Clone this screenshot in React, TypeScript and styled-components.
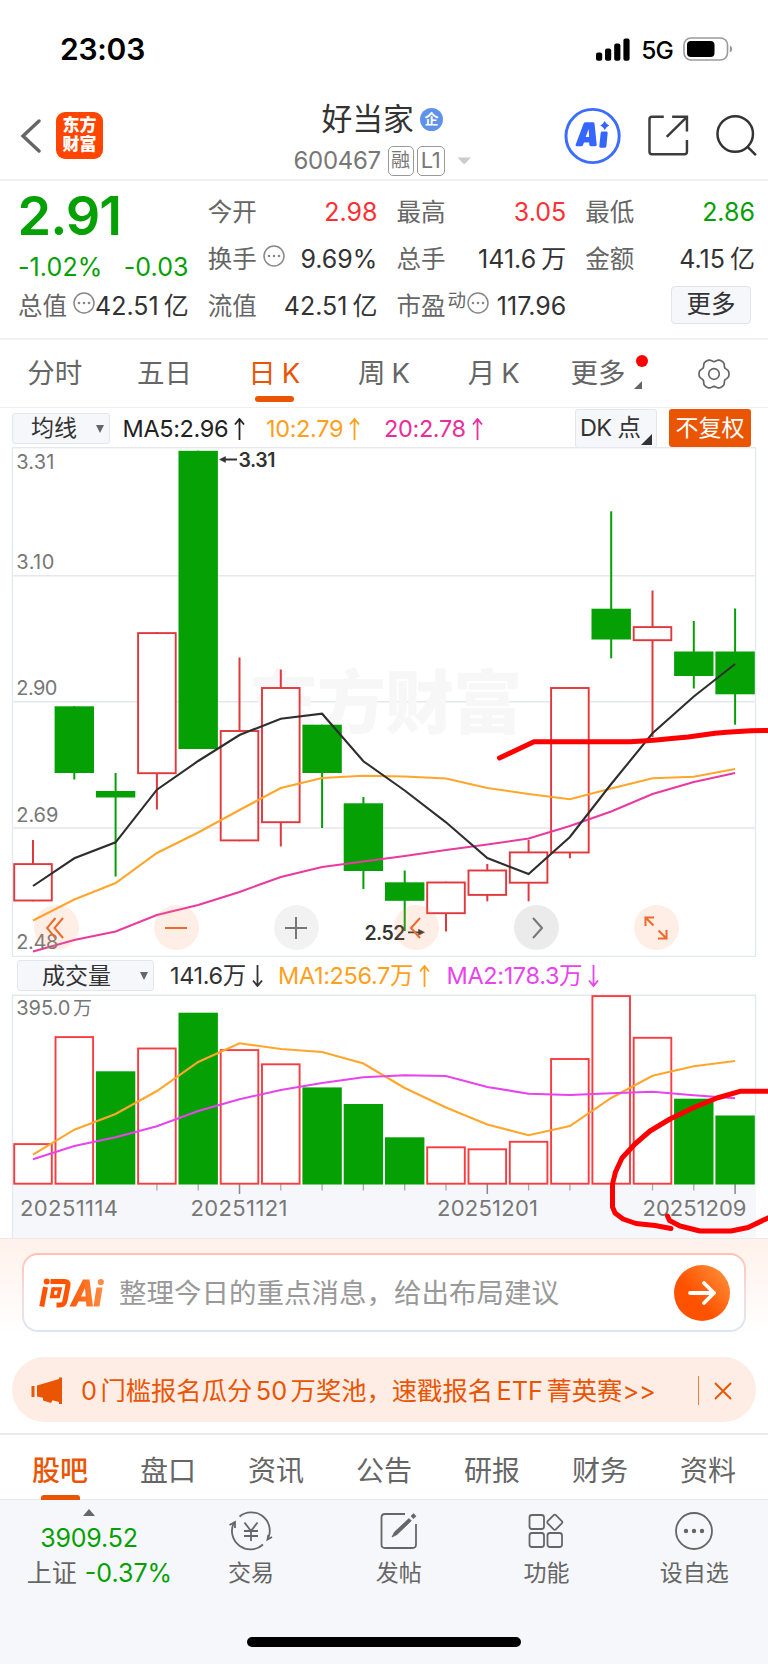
import React from "react";
import styled, { createGlobalStyle } from "styled-components";

const GREEN = "#04a004";
const ORANGE = "#ea5504";
const SANS = `Inter, "Noto Sans CJK SC", sans-serif`;

const GlobalStyle = createGlobalStyle`
  * { box-sizing: border-box; }
  body { margin: 0; background: #fff; }
  button { font: inherit; border: 0; padding: 0; background: none; color: inherit; }
`;

const Page = styled.main`
  position: relative;
  width: 768px;
  height: 1664px;
  overflow: hidden;
  display: flex;
  flex-direction: column;
  background: #fff;
  color: #333;
  font-family: ${SANS};
  font-size: 25px;
  line-height: 1;
  white-space: nowrap;
`;

/* ---------- status bar ---------- */

const StatusBar = styled.header`
  height: 100px;
  flex: none;
  display: flex;
  align-items: center;
  justify-content: space-between;
  padding: 0 35px 2px 60px;
  color: #000;
`;

const Clock = styled.time`
  font-size: 30px;
  font-weight: 600;
  letter-spacing: -0.25px;
`;

const StatusIcons = styled.div`
  display: flex;
  align-items: center;
`;

const Network = styled.span`
  font-size: 24.5px;
  font-weight: 500;
  margin: 2px 10px 0 11px;
  letter-spacing: -0.8px;
`;

/* ---------- title bar ---------- */

const TitleBar = styled.div`
  height: 81px;
  flex: none;
  display: grid;
  grid-template-columns: 270px 1fr 270px;
  border-bottom: 2px solid #efefef;
`;

const TitleLeft = styled.div`
  display: flex;
  align-items: center;
  gap: 15px;
  padding: 0 0 8px 20px;
`;

const BrandMark = styled.div`
  width: 47px;
  height: 47px;
  border-radius: 9px;
  background: #ff4500;
  color: #fff;
  display: flex;
  align-items: center;
  justify-content: center;
  text-align: center;
  font-size: 17px;
  font-weight: 900;
  line-height: 19px;
  padding-bottom: 1px;
`;

const TitleCenter = styled.div`
  display: flex;
  flex-direction: column;
  align-items: flex-start;
  padding: 2px 0 0 24px;
`;

const StockName = styled.h1`
  margin: 0 0 0 27.5px;
  height: 34px;
  display: flex;
  align-items: center;
  gap: 6px;
  color: #333;
  font-size: 30.8px;
  font-weight: 400;
`;

const CompanyBadge = styled.span`
  width: 23px;
  height: 23px;
  border-radius: 50%;
  background: #6092ec;
  color: #fff;
  font-size: 14px;
  font-weight: 700;
  line-height: 22px;
  text-align: center;
  margin-top: 1px;
`;

const CodeLine = styled.div`
  display: flex;
  align-items: center;
  margin-top: 10px;
  color: #777;
`;

const Code = styled.span`
  font-size: 24px;
  letter-spacing: -0.3px;
  width: 94px;
  margin-left: -0.5px;
`;

const Tag = styled.span`
  height: 30px;
  width: ${(p: { $w: number }) => p.$w}px;
  border: 1.5px solid #999;
  border-radius: 5px;
  margin-right: 3px;
  font-size: 19px;
  line-height: 27px;
  text-align: center;
`;

const LevelTag = styled(Tag)`
  font-size: 22px;
  letter-spacing: -0.5px;
`;

const TitleRight = styled.div`
  display: flex;
  align-items: center;
  padding: 0 11px 8px 66px;
  gap: 27px;
`;

/* ---------- quote ---------- */

const Quote = styled.section`
  height: 159px;
  flex: none;
  display: grid;
  grid-template-columns: repeat(4, 1fr);
  column-gap: 20px;
  padding: 7.5px 13px 0 19px;
  border-bottom: 2px solid #f3f3f3;
`;

const QuoteColumn = styled.div`
  display: flex;
  flex-direction: column;
`;

const Cell = styled.div`
  height: 47px;
  display: flex;
  align-items: center;
  justify-content: space-between;
`;

const Label = styled.span`
  font-size: 24.5px;
  color: #666;
  display: flex;
  margin-left: -1px;
`;

const Value = styled.span<{ $tone?: string }>`
  font-size: 25px;
  letter-spacing: 0;
  color: ${(p) => p.$tone ?? "#333"};
`;

const Unit = styled.span`
  margin-left: 5px;
`;

const Price = styled.div`
  height: 54px;
  font-size: 54px;
  line-height: 54px;
  font-weight: 600;
  color: ${GREEN};
  letter-spacing: -1px;
  margin-left: -1.5px;
`;

const Change = styled.div`
  height: 40px;
  padding-top: 12px;
  display: flex;
  justify-content: space-between;
  color: ${GREEN};
  letter-spacing: 0.1px;
  margin-left: -1px;
`;

const Superscript = styled.span`
  font-size: 18.5px;
  margin: -3px 0 0 2px;
`;

const MoreButton = styled.button`
  width: 80px;
  height: 38px;
  margin: -3px 4px 0 auto;
  border: 1.5px solid #e2e4ea;
  border-radius: 4px;
  background: #f6f7fa;
  font-size: 24.5px;
  color: #333;
`;

/* ---------- period tabs ---------- */

const PeriodTabs = styled.nav`
  height: 68px;
  flex: none;
  display: grid;
  grid-template-columns: repeat(7, 1fr);
  border-bottom: 1px solid #f0f0f0;
`;

const Period = styled.button<{ $active?: boolean; $shift?: number }>`
  display: flex;
  align-items: center;
  justify-content: center;
  font-size: 27.5px;
  color: ${(p) => (p.$active ? ORANGE : "#666")};
  position: relative;
  padding: 1px 0 0 ${(p) => p.$shift ?? 0}px;
  ${(p) =>
    p.$active &&
    `&::after {
      content: "";
      position: absolute;
      left: 50%;
      margin-left: -19.5px;
      bottom: 5px;
      width: 39px;
      height: 6px;
      border-radius: 3px;
      background: ${ORANGE};
    }`}
`;

const K = styled.span`
  margin-left: 6px;
`;

const MoreMarks = styled.span`
  width: 15px;
  height: 30px;
  margin-left: 7px;
  position: relative;
`;

const RedDot = styled.i`
  position: absolute;
  right: -1px;
  top: -4px;
  width: 12px;
  height: 12px;
  border-radius: 50%;
  background: #fe0000;
`;

const Corner = styled.i<{ $size: number }>`
  width: 0;
  height: 0;
  border-left: ${(p) => p.$size}px solid transparent;
  border-bottom: ${(p) => p.$size}px solid currentColor;
`;

const MoreCorner = styled(Corner)`
  position: absolute;
  left: 2px;
  bottom: 0;
`;

/* ---------- indicator rows ---------- */

const IndicatorRow = styled.div<{ $h: number; $left: number }>`
  height: ${(p) => p.$h}px;
  flex: none;
  display: flex;
  align-items: center;
  padding: 1px 17px 0 ${(p) => p.$left}px;
  font-size: 23.5px;
`;

const Picker = styled.button<{ $w: number; $gap: number }>`
  width: ${(p) => p.$w}px;
  height: 31px;
  border: 1.5px solid #e4e6ec;
  border-radius: 3px;
  background: #f6f7fa;
  display: flex;
  align-items: center;
  justify-content: flex-end;
  gap: ${(p) => p.$gap}px;
  padding: 1px 5px 0 0;
  font-size: 23px;
  color: #333;
`;

const Caret = styled.i`
  border: 4.5px solid transparent;
  border-top: 8px solid #666;
  border-bottom: 0;
`;

const Average = styled.span<{ $w: number; $tone: string }>`
  width: ${(p) => p.$w}px;
  display: flex;
  align-items: center;
  gap: 6px;
  color: ${(p) => p.$tone};
  letter-spacing: -0.35px;
  padding-top: 1px;
`;

const AverageText = styled.span<{ $left: number }>`
  margin-left: ${(p) => p.$left}px;
`;

const DkButton = styled.button`
  width: 82px;
  height: 39px;
  margin-left: auto;
  border: 1.5px solid #e4e6ec;
  border-radius: 3px;
  background: #f6f7fa;
  display: flex;
  align-items: center;
  justify-content: space-between;
  padding: 0 4px 0 4px;
  font-size: 23.5px;
  letter-spacing: -0.6px;
  color: #333;
`;

const DkCorner = styled(Corner)`
  align-self: flex-end;
  margin-bottom: 2px;
`;

const AdjustButton = styled.button`
  width: 82px;
  height: 38px;
  margin-left: 12px;
  border-radius: 3px;
  background: ${ORANGE};
  color: #fff;
  font-size: 23px;
  padding-top: 1px;
`;

/* ---------- chart ---------- */

const ChartBox = styled.div`
  position: relative;
  flex: none;
  svg { display: block; }
`;

const ChartTools = styled.div`
  position: absolute;
  left: 33.5px;
  top: 458px;
  display: flex;
  gap: 75px;
`;

const ToolButton = styled.button<{ $tone: "peach" | "gray" | "dark" }>`
  width: 45px;
  height: 45px;
  border-radius: 50%;
  display: flex;
  align-items: center;
  justify-content: center;
  background: ${(p) =>
    p.$tone === "peach"
      ? "rgba(247,140,85,.15)"
      : p.$tone === "gray"
      ? "rgba(0,0,0,.05)"
      : "rgba(0,0,0,.08)"};
  color: ${(p) => (p.$tone === "peach" ? "#f0682a" : "#777")};
`;

/* ---------- AI prompt ---------- */

const AiSection = styled.section`
  height: 119px;
  flex: none;
  border-top: 1.5px solid #e9e9ea;
  background: linear-gradient(#fff1eb, #fff 95px);
  padding: 14px 22px 0 22px;
`;

const AiCard = styled.div`
  height: 79px;
  border: 2px solid transparent;
  border-radius: 16px;
  background: linear-gradient(#fff, #fff) padding-box,
    linear-gradient(#ffc1b2, #f6dde0 55%, #dde4f6) border-box;
  display: flex;
  align-items: center;
  padding: 0 14px 0 15px;
`;

const AiPrompt = styled.span`
  flex: 1;
  margin: 3px 0 0 14px;
  font-size: 27.5px;
  color: #999;
`;

const SendButton = styled.button`
  width: 56px;
  height: 56px;
  border-radius: 50%;
  background: linear-gradient(50deg, #ff5200 40%, #ff9640);
  display: flex;
  align-items: center;
  justify-content: center;
`;

/* ---------- promo ---------- */

const Promo = styled.div`
  height: 65px;
  flex: none;
  margin: 0 12px 11px;
  border-radius: 33px;
  background: #fdede4;
  color: ${ORANGE};
  display: flex;
  align-items: center;
  padding: 2px 24px 0 19px;
`;

const PromoText = styled.span`
  flex: 1;
  margin: 1px 0 0 18px;
  font-size: 25.3px;
  word-spacing: -3.6px;
`;

const PromoDivider = styled.i`
  width: 1.5px;
  height: 29px;
  background: #ee7d42;
  margin-right: 15px;
`;

/* ---------- section tabs ---------- */

const SectionTabs = styled.nav`
  height: 67px;
  flex: none;
  border-top: 2px solid #ebebeb;
  border-bottom: 1.5px solid #e9e9ea;
  display: grid;
  grid-template-columns: repeat(7, 1fr);
  padding: 0 6px 0 6px;
`;

const SectionTab = styled.button<{ $active?: boolean }>`
  font-size: 28px;
  font-weight: ${(p) => (p.$active ? 500 : 400)};
  color: ${(p) => (p.$active ? ORANGE : "#666")};
  display: flex;
  flex-direction: column;
  align-items: center;
  padding-top: 22px;
  &::after {
    content: "";
    width: 39px;
    height: 5px;
    margin-top: 9.5px;
    border-radius: 3px 3px 0 0;
    background: ${(p) => (p.$active ? ORANGE : "transparent")};
  }
`;

/* ---------- bottom bar ---------- */

const BottomBar = styled.footer`
  flex: 1;
  background: #f6f7fa;
  display: flex;
  flex-direction: column;
  justify-content: space-between;
  align-items: center;
  padding-bottom: 17px;
`;

const BottomRow = styled.div`
  width: 768px;
  display: grid;
  grid-template-columns: 177px repeat(4, 147.8px);
`;

const IndexBlock = styled.div`
  display: flex;
  flex-direction: column;
  align-items: center;
  padding: 9px 0 0 22px;
  color: ${GREEN};
`;

const UpCaret = styled.i`
  border: 6.5px solid transparent;
  border-bottom: 7px solid #666;
  border-top: 0;
  margin-right: 21px;
`;

const IndexValue = styled.span`
  margin: 10px 21px 10px 0;
  letter-spacing: -0.2px;
`;

const IndexName = styled.span`
  display: flex;
  gap: 8px;
  align-items: center;
`;

const Gray = styled.span`
  color: #666;
`;

const Action = styled.button`
  display: flex;
  flex-direction: column;
  align-items: center;
  gap: 10px;
  padding-top: 10px;
  font-size: 23px;
  color: #666;
`;

const HomeIndicator = styled.div`
  width: 274px;
  height: 10px;
  border-radius: 5px;
  background: #000;
`;

const Markup = styled.svg`
  position: absolute;
  left: 0;
  top: 0;
  pointer-events: none;
`;

/* ---------- small drawings ---------- */

const Arrow = ({ down }: { down?: boolean }) => (
  <svg width="11" height="22" viewBox="0 0 11 22" fill="none" stroke="currentColor" strokeWidth="1.8">
    <path d={down ? "M5.5 0V21M1 15.5L5.5 21L10 15.5" : "M5.5 22V1M1 6.5L5.5 1L10 6.5"} />
  </svg>
);

const Hint = () => (
  <svg width="22" height="22" viewBox="0 0 22 22" fill="none" stroke="#888" strokeWidth="1.5">
    <circle cx="11" cy="11" r="10" />
    <g fill="#888" stroke="none">
      <circle cx="6" cy="11" r="1.3" />
      <circle cx="11" cy="11" r="1.3" />
      <circle cx="16" cy="11" r="1.3" />
    </g>
  </svg>
);

const HintSlot = styled.span<{ $left: number }>`
  margin: -2px 0 0 ${(p) => p.$left}px;
  height: 22px;
`;

const gearOutline = Array.from({ length: 72 }, (_, i) => {
  const a = (i * Math.PI) / 36;
  const r = 14 + 1.3 * Math.cos(6 * a) - 0.3 * Math.cos(12 * a);
  return `${(r * Math.cos(a)).toFixed(2)},${(r * Math.sin(a)).toFixed(2)}`;
}).join(" ");

const Gear = () => (
  <svg width="34" height="34" viewBox="-17 -17 34 34" fill="none" stroke="#666" strokeWidth="1.7" strokeLinejoin="round">
    <polygon points={gearOutline} />
    <circle r="5.3" />
  </svg>
);

/* ---------- data ---------- */

const FIRST_X = 33;
const PITCH = 41.3;
const BAR = 39.4;
const cx = (i: number) => FIRST_X + i * PITCH;

type Candle = { up: boolean; top: number; bottom: number; high?: number; low?: number };

const candles: Candle[] = [
  { up: true, top: 863.3, bottom: 901.3, high: 840 },
  { up: false, top: 706.3, bottom: 773, low: 779.5 },
  { up: false, top: 791, bottom: 797.5, high: 773, low: 876.5 },
  { up: true, top: 632.3, bottom: 774, low: 809.5 },
  { up: false, top: 450.8, bottom: 749 },
  { up: true, top: 730.2, bottom: 841.2, high: 657.5 },
  { up: true, top: 687.2, bottom: 823, high: 669.5, low: 846.5 },
  { up: false, top: 724.7, bottom: 773, low: 828 },
  { up: false, top: 803.3, bottom: 871, high: 797, low: 889 },
  { up: false, top: 882.3, bottom: 900.8, high: 870.5, low: 931 },
  { up: true, top: 881.7, bottom: 914, low: 931.5 },
  { up: true, top: 869.7, bottom: 895.7, high: 864, low: 901.3 },
  { up: true, top: 851.6, bottom: 883.5, high: 840, low: 901.3 },
  { up: true, top: 687.2, bottom: 853.3, low: 858.3 },
  { up: false, top: 608.7, bottom: 639.5, high: 511.3, low: 658.3 },
  { up: true, top: 626.3, bottom: 641, high: 590.5, low: 737 },
  { up: false, top: 651.5, bottom: 676, high: 621, low: 688.5 },
  { up: false, top: 651.5, bottom: 694.3, high: 608.5, low: 724.7 },
];

const volumes: [number, boolean][] = [
  [1143.3, true], [1036.3, true], [1071.3, false], [1047.7, true], [1012.7, false], [1049.3, true],
  [1063.5, true], [1087.4, false], [1104, false], [1137.3, false], [1146.5, true], [1148.5, true],
  [1141, true], [1058.2, true], [995.3, true], [1037, true], [1098.7, false], [1115.5, false],
];

const priceLines = [
  { color: "#e93aa0", ys: [951.5, 940, 931.5, 915, 905, 892, 877, 867, 861.5, 856, 850, 844.5, 838.5, 826, 811.5, 794, 782, 773] },
  { color: "#ffa62b", ys: [920.5, 899.5, 883, 853, 832.5, 810, 788, 778, 775.7, 776.5, 778.5, 788, 794, 799.2, 788.5, 778.2, 776.7, 769] },
  { color: "#2e2e2e", ys: [886, 858.3, 842.3, 789.7, 761, 735, 718.7, 713.7, 761.3, 790.5, 822.3, 858, 874, 837, 784, 733.3, 696.5, 664] },
];

const volumeLines = [
  { color: "#ffa62b", ys: [1154.7, 1129.7, 1114, 1091, 1062, 1043.3, 1049, 1052, 1063.5, 1088, 1107.5, 1124.5, 1135.2, 1126, 1098, 1075.8, 1066.3, 1061] },
  { color: "#e844ee", ys: [1159.3, 1146, 1137.3, 1126.3, 1111, 1099.2, 1090, 1083, 1077.3, 1075.3, 1076, 1087, 1093.7, 1095, 1093.3, 1091.8, 1095.3, 1098.3] },
];

const toPoints = (ys: number[]) => ys.map((y, i) => `${cx(i)},${y}`).join(" ");

const priceLabels: [string, number, number][] = [
  ["3.31", 469, 38],
  ["3.10", 568.8, 38],
  ["2.90", 695.3, 41],
  ["2.69", 822.3, 42],
  ["2.48", 949.3, 42],
];

const dateLabels: [string, number, number][] = [
  ["20251114", 20, 98],
  ["20251121", 190.5, 97],
  ["20251201", 437, 101],
  ["20251209", 642.5, 104],
];

const Bar = ({ i, up, top, bottom, red }: { i: number; up: boolean; top: number; bottom: number; red: string }) => {
  const x = cx(i) - BAR / 2;
  return up ? (
    <rect x={x + 0.9} y={top + 0.8} width={BAR - 1.8} height={bottom - top - 1.6} fill="#fff" stroke={red} strokeWidth="1.9" />
  ) : (
    <rect x={x} y={top} width={BAR} height={bottom - top} fill={GREEN} />
  );
};

const PriceChart = () => (
  <svg width="768" height="510" viewBox="0 447 768 510" fontFamily={SANS}>
    <g stroke="#e6e8ef" strokeWidth="1.4" fill="none">
      <rect x="12.5" y="447.7" width="743" height="508.8" />
      <path d="M12.5 575.7H755.5M12.5 701.8H755.5M12.5 828H755.5" />
    </g>
    <text x="249" y="728" fontSize="69" fontWeight="900" fill="#f7f7f7" textLength="273">
      东方财富
    </text>
    {candles.map((c, i) => {
      const color = c.up ? "#e0383c" : GREEN;
      return (
        <g key={i}>
          <path d={`M${cx(i)} ${c.high ?? c.top}V${c.low ?? c.bottom}`} stroke={color} strokeWidth="2" />
          <Bar i={i} up={c.up} top={c.top} bottom={c.bottom} red={color} />
        </g>
      );
    })}
    {priceLines.map((l) => (
      <polyline key={l.color} points={toPoints(l.ys)} fill="none" stroke={l.color} strokeWidth="2.1" />
    ))}
    <g fontSize="20" fill="#777">
      {priceLabels.map(([t, y, w]) => (
        <text key={t} x="16.3" y={y} textLength={w}>
          {t}
        </text>
      ))}
    </g>
    <g fontSize="19.5" fontWeight="600" fill="#333">
      <text x="238.5" y="466.7" textLength="37">3.31</text>
      <text x="364.5" y="940" textLength="41">2.52</text>
      <g stroke="#333" strokeWidth="1.8">
        <path d="M224 459.5H237M408 932.3H420" />
        <path d="M219.5 459.5L225.5 456.5V462.5ZM424.5 932.3L418.5 929.3V935.3Z" strokeWidth="0.5" />
      </g>
    </g>
  </svg>
);

const VolumeChart = () => (
  <svg width="768" height="245" viewBox="0 993 768 245" fontFamily={SANS}>
    <rect x="12" y="1184" width="744" height="54" fill="#f6f7fb" />
    <path d="M12.5 1238V995.3H755.5V1184" fill="none" stroke="#e6e8ef" strokeWidth="1.4" />
    <path
      d={[3, 4, 6, 7, 8, 9, 10, 12, 13, 15, 16].map((i) => `M${cx(i)} 1184V1190.5`).join("")}
      stroke="#aaa"
      strokeWidth="1.3"
    />
    <path d={[5, 11, 17].map((i) => `M${cx(i)} 1184V1194`).join("")} stroke="#888" strokeWidth="1.5" />
    {volumes.map(([top, up], i) => (
      <Bar key={i} i={i} up={up} top={top} bottom={1184.5} red="#f83c40" />
    ))}
    {volumeLines.map((l) => (
      <polyline key={l.color} points={toPoints(l.ys)} fill="none" stroke={l.color} strokeWidth="2.1" />
    ))}
    <text x="16.3" y="1014.5" fontSize="20" fill="#777" textLength="54">395.0</text>
    <text x="73" y="1014.5" fontSize="19" fill="#777">万</text>
    <g fontSize="22" fill="#777">
      {dateLabels.map(([t, x, w]) => (
        <text key={t} x={x} y="1215.7" textLength={w}>
          {t}
        </text>
      ))}
    </g>
  </svg>
);

export default function App() {
  return (
    <Page>
      <GlobalStyle />

      <StatusBar>
        <Clock>23:03</Clock>
        <StatusIcons>
          <svg width="34" height="23" viewBox="0 0 34 23">
            <rect x="0" y="14.5" width="6.2" height="8.2" rx="2" />
            <rect x="9" y="10.5" width="6.2" height="12.2" rx="2" />
            <rect x="18.2" y="5.5" width="6.2" height="17.2" rx="2" />
            <rect x="27.4" y="0.5" width="6.2" height="22.2" rx="2" />
          </svg>
          <Network>5G</Network>
          <svg width="50" height="24" viewBox="0 0 50 24">
            <rect x="1" y="1" width="43.5" height="22" rx="7" fill="none" stroke="#9a9a9a" strokeWidth="1.6" />
            <rect x="4" y="4" width="27.5" height="16" rx="4" />
            <path d="M46.8 8.5Q49.3 9.5 49.3 12T46.8 15.5Z" fill="#9a9a9a" />
          </svg>
        </StatusIcons>
      </StatusBar>

      <TitleBar>
        <TitleLeft>
          <svg width="21" height="36" viewBox="0 0 21 36" fill="none" stroke="#666" strokeWidth="3.4" strokeLinecap="round">
            <path d="M19 3L3 18L19 33" />
          </svg>
          <BrandMark>
            东方
            <br />
            财富
          </BrandMark>
        </TitleLeft>
        <TitleCenter>
          <StockName>
            好当家 <CompanyBadge>企</CompanyBadge>
          </StockName>
          <CodeLine>
            <Code>600467</Code>
            <Tag $w={26}>融</Tag>
            <LevelTag $w={28}>L1</LevelTag>
            <svg width="24" height="8" viewBox="0 0 24 8">
              <path d="M9.5 0.5H23L16.2 7.5Z" fill="#ccc" />
            </svg>
          </CodeLine>
        </TitleCenter>
        <TitleRight>
          <svg width="58" height="58" viewBox="0 0 58 58">
            <circle cx="29" cy="29" r="27" fill="none" stroke="#3d6dff" strokeWidth="3" />
            <path
              fill="#3566ff"
              fillRule="evenodd"
              d="M22 15H29.5Q30.8 15 31 16.5L33.2 38Q33.3 39.5 32 39.5H27Q25.8 39.5 25.7 38L25.5 35.5H20.3L19.2 38.5Q18.8 39.5 17.8 39.5H12.8Q11.2 39.5 11.8 38L19.8 16.5Q20.500 15 22 15ZM25 22L22 30H25.5ZM38.800 24.500H43Q44.400 24.500 44.300 26L43 39.500Q42.800 41 41.400 41H37Q35.600 41 35.800 39.500L37.200 26Q37.400 24.500 38.800 24.500ZM41.300 13.800L43.200 16.500L45.800 18.300L43.200 20.100L41.300 22.800L39.400 20.100L36.800 18.300L39.400 16.500Z"
            />
          </svg>
          <svg width="41" height="41" viewBox="0 0 41 41" fill="none" stroke="#3c3c3c" strokeWidth="2.5">
            <path d="M16 1.5H4Q1.500 1.500 1.500 4V37Q1.500 39.500 4 39.500H37Q39.500 39.500 39.500 37V25" />
            <path d="M24.500 1.500H39.500V16.500M39.500 1.500L19 22" />
          </svg>
          <svg width="42" height="42" viewBox="0 0 42 42" fill="none" stroke="#333" strokeWidth="2.5">
            <circle cx="19.5" cy="19" r="18" />
            <path d="M31.500 31.500L40.500 40.500" />
          </svg>
        </TitleRight>
      </TitleBar>

      <Quote>
        <QuoteColumn>
          <Price>2.91</Price>
          <Change>
            <span>-1.02%</span>
            <span>-0.03</span>
          </Change>
          <Cell>
            <Label>
              总值
              <HintSlot $left={6}>
                <Hint />
              </HintSlot>
            </Label>
            <Value>
              42.51<Unit>亿</Unit>
            </Value>
          </Cell>
        </QuoteColumn>
        <QuoteColumn>
          <Cell>
            <Label>今开</Label>
            <Value $tone="#fb3034">2.98</Value>
          </Cell>
          <Cell>
            <Label>
              换手
              <HintSlot $left={6}>
                <Hint />
              </HintSlot>
            </Label>
            <Value>9.69%</Value>
          </Cell>
          <Cell>
            <Label>流值</Label>
            <Value>
              42.51<Unit>亿</Unit>
            </Value>
          </Cell>
        </QuoteColumn>
        <QuoteColumn>
          <Cell>
            <Label>最高</Label>
            <Value $tone="#fb3034">3.05</Value>
          </Cell>
          <Cell>
            <Label>总手</Label>
            <Value>
              141.6<Unit>万</Unit>
            </Value>
          </Cell>
          <Cell>
            <Label>
              市盈<Superscript>动</Superscript>
              <HintSlot $left={1}>
                <Hint />
              </HintSlot>
            </Label>
            <Value>117.96</Value>
          </Cell>
        </QuoteColumn>
        <QuoteColumn>
          <Cell>
            <Label>最低</Label>
            <Value $tone={GREEN}>2.86</Value>
          </Cell>
          <Cell>
            <Label>金额</Label>
            <Value>
              4.15<Unit>亿</Unit>
            </Value>
          </Cell>
          <Cell>
            <MoreButton>更多</MoreButton>
          </Cell>
        </QuoteColumn>
      </Quote>

      <PeriodTabs>
        <Period>分时</Period>
        <Period>五日</Period>
        <Period $active>
          日<K>K</K>
        </Period>
        <Period>
          周<K>K</K>
        </Period>
        <Period>
          月<K>K</K>
        </Period>
        <Period $shift={11}>
          更多
          <MoreMarks>
            <RedDot />
            <MoreCorner $size={8} />
          </MoreMarks>
        </Period>
        <Period $shift={1}>
          <Gear />
        </Period>
      </PeriodTabs>

      <IndicatorRow $h={39} $left={12}>
        <Picker $w={98} $gap={19}>
          均线
          <Caret />
        </Picker>
        <Average $w={156} $tone="#222">
          <AverageText $left={12.5}>MA5:2.96</AverageText>
          <Arrow />
        </Average>
        <Average $w={118} $tone="#ffa01c">
          10:2.79
          <Arrow />
        </Average>
        <Average $w={110} $tone="#ea2d9c">
          20:2.78
          <Arrow />
        </Average>
        <DkButton>
          DK 点
          <DkCorner $size={11} />
        </DkButton>
        <AdjustButton>不复权</AdjustButton>
      </IndicatorRow>

      <ChartBox>
        <PriceChart />
        <ChartTools>
          <ToolButton $tone="peach">
            <svg width="20" height="24" viewBox="0 0 20 24" fill="none" stroke="currentColor" strokeWidth="2">
              <path d="M9.5 2L1 12L9.5 22M17 2L8.500 12L17 22" />
            </svg>
          </ToolButton>
          <ToolButton $tone="peach">
            <svg width="22" height="22" viewBox="0 0 22 22" stroke="currentColor" strokeWidth="2">
              <path d="M0 11H22" />
            </svg>
          </ToolButton>
          <ToolButton $tone="gray">
            <svg width="22" height="22" viewBox="0 0 22 22" stroke="currentColor" strokeWidth="2">
              <path d="M0 11H22M11 0V22" />
            </svg>
          </ToolButton>
          <ToolButton $tone="peach">
            <svg width="14" height="24" viewBox="0 0 14 24" fill="none" stroke="currentColor" strokeWidth="2">
              <path d="M11 2L2 12L11 22" />
            </svg>
          </ToolButton>
          <ToolButton $tone="dark">
            <svg width="14" height="24" viewBox="0 0 14 24" fill="none" stroke="currentColor" strokeWidth="2">
              <path d="M4 2L13 12L4 22" />
            </svg>
          </ToolButton>
          <ToolButton $tone="peach">
            <svg width="24" height="24" viewBox="0 0 24 24" fill="none" stroke="currentColor" strokeWidth="2">
              <path d="M1.500 10V1.500H10M1.500 1.500L9.500 9.500M22.500 14V22.500H14M22.500 22.500L14.500 14.500" />
            </svg>
          </ToolButton>
        </ChartTools>
      </ChartBox>

      <IndicatorRow $h={36} $left={17}>
        <Picker $w={137} $gap={29}>
          成交量
          <Caret />
        </Picker>
        <Average $w={124} $tone="#333">
          <AverageText $left={16}>141.6万</AverageText>
          <Arrow down />
        </Average>
        <Average $w={168.5} $tone="#ffa01c">
          MA1:256.7万
          <Arrow />
        </Average>
        <Average $w={170} $tone="#e844ee">
          MA2:178.3万
          <Arrow down />
        </Average>
      </IndicatorRow>

      <ChartBox>
        <VolumeChart />
      </ChartBox>

      <AiSection>
        <AiCard>
          <svg width="66" height="30" viewBox="0 0 66 30">
            <defs>
              <linearGradient id="ask" gradientUnits="userSpaceOnUse" x1="0" y1="0" x2="66" y2="0">
                <stop offset="0.4" stopColor="#ff5300" />
                <stop offset="1" stopColor="#ff8f45" />
              </linearGradient>
            </defs>
            <g fill="none" stroke="url(#ask)">
              <path d="M6.500 9L2.800 28.500" strokeWidth="5" />
              <path d="M11.500 3.500H25.500Q29.500 3.500 29 7L25.800 23.500Q25 27 21 27H17.500" strokeWidth="5" />
              <path d="M14 11H21L19.300 18.500H12.800L14.300 9.500" strokeWidth="3.600" />
            </g>
            <path
              fill="url(#ask)"
              fillRule="evenodd"
              d="M44 1.500H50.500L54 28.500H47.500L47 23.500H39.500L37 28.500H30.500ZM46 10L42 18.500H46.700ZM57.500 9.500H63.500L60.500 28.500H54.500Z"
            />
            <circle cx="7.700" cy="3.600" r="3" fill="#ff5300" />
            <circle cx="61.800" cy="4" r="3.100" fill="#ff8f45" />
          </svg>
          <AiPrompt>整理今日的重点消息，给出布局建议</AiPrompt>
          <SendButton>
            <svg width="28" height="24" viewBox="0 0 28 24" fill="none" stroke="#fff" strokeWidth="3.8" strokeLinecap="round" strokeLinejoin="round">
              <path d="M2 12H26M16 2L26 12L16 22" />
            </svg>
          </SendButton>
        </AiCard>
      </AiSection>

      <Promo>
        <svg width="32" height="28" viewBox="0 0 32 28" fill={ORANGE}>
          <path d="M0.500 9H3.500V20H0.500ZM6 8.500L28 2V0.500H31V27H28V25L21.500 23.200L20 26L12 23.500V20.800L6 19.500Z" />
        </svg>
        <PromoText>0 门槛报名瓜分 50 万奖池，速戳报名 ETF 菁英赛&gt;&gt;</PromoText>
        <PromoDivider />
        <svg width="18" height="18" viewBox="0 0 18 18" stroke={ORANGE} strokeWidth="1.9">
          <path d="M1 1L17 17M17 1L1 17" />
        </svg>
      </Promo>

      <SectionTabs>
        <SectionTab $active>股吧</SectionTab>
        <SectionTab>盘口</SectionTab>
        <SectionTab>资讯</SectionTab>
        <SectionTab>公告</SectionTab>
        <SectionTab>研报</SectionTab>
        <SectionTab>财务</SectionTab>
        <SectionTab>资料</SectionTab>
      </SectionTabs>

      <BottomBar>
        <BottomRow>
          <IndexBlock>
            <UpCaret />
            <IndexValue>3909.52</IndexValue>
            <IndexName>
              <Gray>上证</Gray> -0.37%
            </IndexName>
          </IndexBlock>
          <Action>
            <svg width="44" height="42" viewBox="-22 -21 44 42" fill="none" stroke="#666" strokeWidth="1.8">
              <path d="M-11.500 -14.500A18.500 18.500 0 0 1 17.500 6.500M12 13.500A18.500 18.500 0 0 1 -17.500 -7.500" />
              <path d="M21 6L16.500 8.500L17.300 4M-21.500 -6L-16 -9V-3" />
              <path d="M-6.500 -8.500L0 0L6.500 -8.500M0 0V10M-7 0H7M-7 5H7" />
            </svg>
            交易
          </Action>
          <Action>
            <svg width="44" height="42" viewBox="-22 -21 44 42" fill="none" stroke="#666" strokeWidth="1.8">
              <path d="M6 -17H-14Q-17.500 -17 -17.500 -13.500V13.500Q-17.500 17 -14 17H13.500Q17 17 17 13.500V-7" />
              <path d="M-7 6L-4.500 1L10 -12.500L12.300 -10.200L-2 3.500Z" fill="#666" strokeWidth="0.8" />
              <path d="M13 -13.500L16 -16.300" strokeWidth="4" />
            </svg>
            发帖
          </Action>
          <Action>
            <svg width="44" height="42" viewBox="-22 -21 44 42" fill="none" stroke="#666" strokeWidth="1.8">
              <rect x="-16.5" y="-16" width="14.5" height="14" rx="2.5" />
              <rect x="-16.5" y="2" width="14.5" height="14" rx="2.5" />
              <rect x="1.5" y="2" width="14.5" height="14" rx="2.5" />
              <rect x="3" y="-14.5" width="11.5" height="11.5" rx="1.5" transform="rotate(45 8.75 -8.75)" />
            </svg>
            功能
          </Action>
          <Action>
            <svg width="44" height="42" viewBox="-22 -21 44 42" fill="none" stroke="#666" strokeWidth="1.8">
              <circle r="18" />
              <g fill="#666" stroke="none">
                <circle cx="-8" r="2.2" />
                <circle r="2.2" />
                <circle cx="8" r="2.2" />
              </g>
            </svg>
            设自选
          </Action>
        </BottomRow>
        <HomeIndicator />
      </BottomBar>

      <Markup width="768" height="1664" viewBox="0 0 768 1664" fill="none" stroke="#fe0000" strokeWidth="5" strokeLinecap="round" strokeLinejoin="round">
        <path d="M499.500 758L534 741.700H630Q654 740.500 688 737L715 733.300Q740 730.800 770 730.500" />
        <path d="M770 1091.300H740L717 1098L695 1107L670 1119L650 1131L635 1144L622 1158L615.500 1172L612.500 1184V1207L615 1213L623 1219L636 1223.500L655 1225.500L671 1228.500" />
        <path d="M667.500 1216L669.500 1220.500L680 1226L700 1231H731L748 1227.500L770 1217" />
      </Markup>
    </Page>
  );
}
